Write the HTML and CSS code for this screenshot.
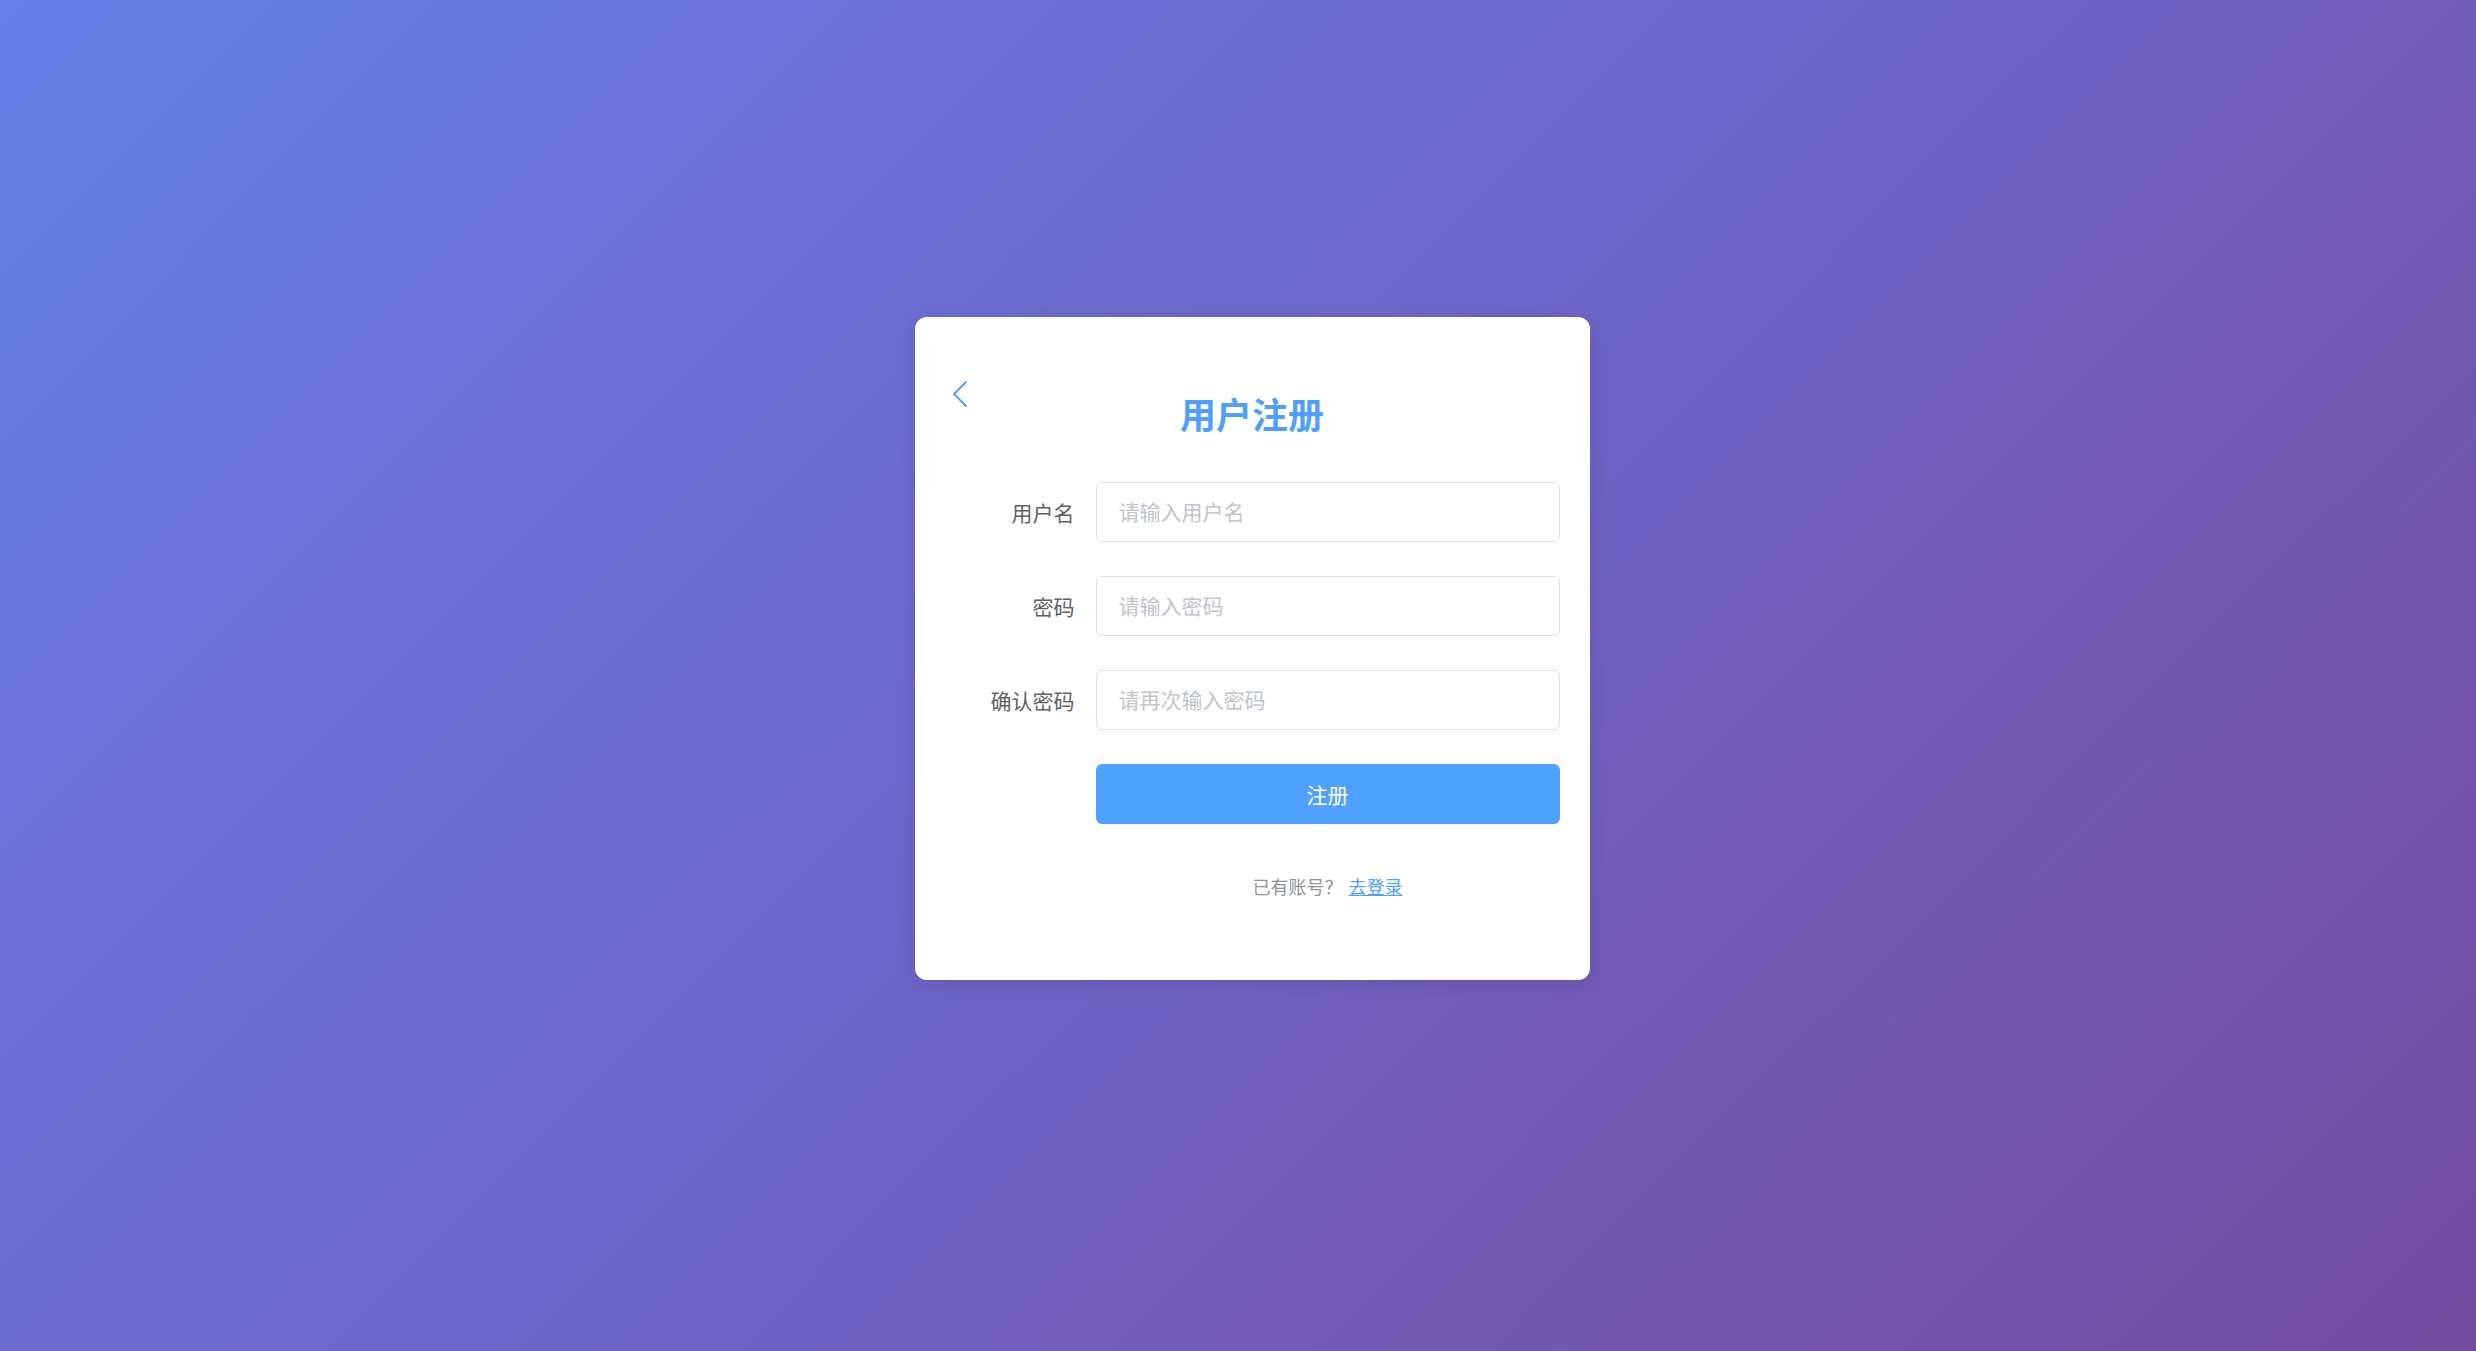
FILE: index.html
```html
<!DOCTYPE html>
<html lang="zh-CN">
<head>
<meta charset="utf-8">
<title>用户注册</title>
<link rel="stylesheet" href="styles.css">
</head>
<body>
<div class="page">
  <div class="card">
    <div class="card-head">
      <a class="back" href="#" aria-label="返回">
        <svg width="18" height="28" viewBox="0 0 18 28"><polyline points="15,2 3,14 15,26" fill="none" stroke="#4a9dfb" stroke-width="1.8" stroke-linecap="round" stroke-linejoin="round"/></svg>
      </a>
      <h2 class="title">用户注册</h2>
    </div>
    <form class="form">
      <div class="form-item">
        <label class="label">用户名</label>
        <input class="input" type="text" placeholder="请输入用户名">
      </div>
      <div class="form-item">
        <label class="label">密码</label>
        <input class="input" type="password" placeholder="请输入密码">
      </div>
      <div class="form-item">
        <label class="label">确认密码</label>
        <input class="input" type="password" placeholder="请再次输入密码">
      </div>
      <div class="form-item">
        <span class="label"></span>
        <button class="btn" type="button">注册</button>
      </div>
      <div class="form-foot">
        <span class="label"></span>
        <p class="foot-text">已有账号？<a class="link" href="#">去登录</a></p>
      </div>
    </form>
  </div>
</div>
</body>
</html>
```

FILE: styles.css
```css
* { box-sizing: border-box; }
html, body { margin: 0; padding: 0; }
body {
  min-height: 100vh;
  background: linear-gradient(135deg, #667eea 0%, #764ba2 100%);
  font-family: "Noto Sans CJK SC", "Noto Sans", sans-serif;
}
.page {
  min-height: 100vh;
  display: flex;
  justify-content: center;
  align-items: flex-start;
  padding-top: 317px;
  padding-left: 28px;
}
.card {
  width: 675px;
  background: #fff;
  border-radius: 12px;
  box-shadow: 0 3px 18px rgba(0, 0, 0, 0.1);
  padding: 78px 30px 82px 45px;
}
.card-head {
  position: relative;
  margin-left: -15px;
}
.back {
  position: absolute;
  left: 6px;
  top: -15px;
  display: block;
  width: 18px;
  height: 28px;
}
.back svg { display: block; }
.title {
  margin: 0;
  text-align: center;
  font-size: 36px;
  line-height: 36px;
  font-weight: 700;
  color: #4e9fff;
}
.form { margin-top: 51px; }
.form-item {
  display: flex;
  align-items: center;
  margin-bottom: 34px;
}
.label {
  flex: 0 0 136px;
  padding-right: 21px;
  text-align: right;
  font-size: 21px;
  line-height: 58px;
  color: #606266;
}
.input {
  flex: 1;
  height: 60px;
  border: 1px solid #dcdfe6;
  border-radius: 6px;
  padding: 0 22px 2px;
  font-family: inherit;
  font-size: 21px;
  color: #606266;
  outline: none;
  background: #fff;
}
.input::placeholder { color: #c0c4cc; }
.btn {
  flex: 1;
  height: 60px;
  border: none;
  border-radius: 6px;
  background: #4fa0ff;
  color: #fff;
  font-family: inherit;
  font-size: 21px;
  padding-bottom: 2px;
  cursor: pointer;
}
.form-foot {
  display: flex;
  align-items: center;
  margin-top: 50px;
}
.form-foot .label { line-height: 24px; }
.foot-text {
  flex: 1;
  margin: 0;
  text-align: center;
  font-size: 18px;
  line-height: 24px;
  color: #909399;
}
.link {
  margin-left: 6px;
  color: #4e9fff;
  text-decoration: underline;
}
```
